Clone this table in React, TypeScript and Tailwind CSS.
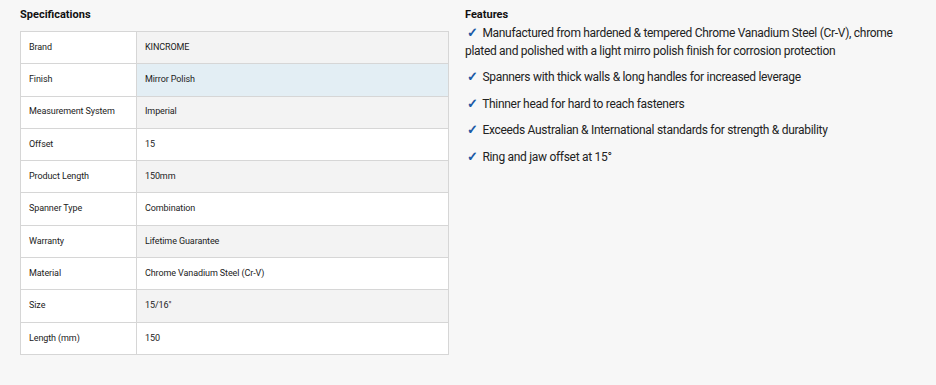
const specs: [string, string][] = [
  ["Brand", "KINCROME"],
  ["Finish", "Mirror Polish"],
  ["Measurement System", "Imperial"],
  ["Offset", "15"],
  ["Product Length", "150mm"],
  ["Spanner Type", "Combination"],
  ["Warranty", "Lifetime Guarantee"],
  ["Material", "Chrome Vanadium Steel (Cr-V)"],
  ["Size", "15/16\""],
  ["Length (mm)", "150"],
];

const features = [
  "Manufactured from hardened & tempered Chrome Vanadium Steel (Cr-V), chrome plated and polished with a light mirro polish finish for corrosion protection",
  "Spanners with thick walls & long handles for increased leverage",
  "Thinner head for hard to reach fasteners",
  "Exceeds Australian & International standards for strength & durability",
  "Ring and jaw offset at 15°",
];

export default function App() {
  return (
    <div className="w-[936px] h-[385px] bg-[#f7f7f7] text-[#222] font-['Roboto',sans-serif] flex gap-4 pl-5 pt-[8px]">
      {/* Specifications */}
      <div className="w-[429px]">
        <h3 className="text-[11px] font-bold leading-[14px] text-[#111]">Specifications</h3>
        <table className="w-full mt-[9px] border-collapse border border-[#d6d6d6] text-[9px] tracking-[-0.1px]">
          <tbody>
            {specs.map(([label, value], i) => (
              <tr key={label} className="h-[32.3px]">
                <td className="w-[116px] bg-white border border-[#d6d6d6] pl-2">{label}</td>
                <td
                  className={`border border-[#d6d6d6] pl-2 ${
                    i === 1 ? "bg-[#e3eef4]" : i % 2 === 0 ? "bg-[#f3f3f3]" : "bg-white"
                  }`}
                >
                  {value}
                </td>
              </tr>
            ))}
          </tbody>
        </table>
      </div>

      {/* Features */}
      <div className="w-[445px]">
        <h3 className="text-[11px] font-bold leading-[14px] text-[#111]">Features</h3>
        <ul className="mt-[2px] text-[12px] leading-[17.5px] text-[#222] tracking-[-0.3px]">
          {features.map((f) => (
            <li key={f} className="mb-[8px]">
              <span className="text-[#1d5aa6] font-bold text-[13px] px-[2px]">✓</span> {f}
            </li>
          ))}
        </ul>
      </div>
    </div>
  );
}
